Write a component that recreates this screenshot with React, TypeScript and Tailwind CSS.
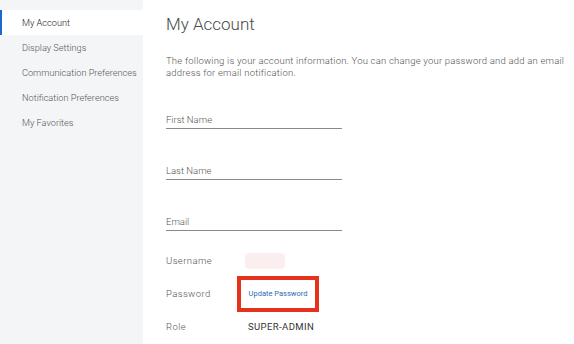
const menu = ['My Account', 'Display Settings', 'Communication Preferences', 'Notification Preferences', 'My Favorites'];

function Field({ label }: { label: string }) {
    return (
        <div className="w-[176px] border-b border-[#8a8a8a] pb-[2px] text-[9.5px] font-light leading-[12px] text-[#555]">
            {label}
        </div>
    );
}

export default function App() {
    return (
        <div className="flex h-[344px] w-[574px] overflow-hidden bg-white font-['Roboto',sans-serif]">
            {/* Sidebar */}
            <div className="w-[143px] shrink-0 bg-[#f4f5f7] pt-[10px]">
                {menu.map((item, i) => (
                    <div
                        key={item}
                        className={`flex h-[25px] items-center text-[9.2px] font-light ${i === 0 ? 'border-l-[2px] border-[#1d69cc] bg-white pl-[20px] text-[#222]' : 'pl-[22px] text-[#555]'}`}
                    >
                        {item}
                    </div>
                ))}
            </div>

            {/* Content */}
            <div className="flex-1 pl-[23px] pr-[4px]">
                <h1 className="mt-[13px] text-[17px] font-light leading-[22px] text-[#4a4a4a]">My Account</h1>
                <p className="mt-[20px] w-[404px] text-[9.5px] font-light leading-[12px] tracking-[0.2px] text-[#555]">
                    The following is your account information. You can change your password and add an email address for email notification.
                </p>

                <div className="mt-[35px] flex flex-col gap-[36px]">
                    <Field label="First Name" />
                    <Field label="Last Name" />
                    <Field label="Email" />
                </div>

                <div className="mt-[14px] flex flex-col text-[9.5px] font-light tracking-[0.4px] text-[#555]">
                    <div className="flex h-[32px] items-center">
                        <span className="w-[79px]">Username</span>
                        <span className="h-[16px] w-[40px] rounded-sm bg-[#fbeeee]" />
                    </div>
                    <div className="flex h-[34px] items-center">
                        <span className="w-[71px]">Password</span>
                        <span className="flex h-[36px] w-[82px] items-center justify-center border-[4px] border-[#e5321c] text-[7.5px] font-normal tracking-normal text-[#2c6db0]">
                            Update Password
                        </span>
                    </div>
                    <div className="flex h-[32px] items-center">
                        <span className="w-[82px]">Role</span>
                        <span className="font-normal text-[#333]">SUPER-ADMIN</span>
                    </div>
                </div>
            </div>
        </div>
    );
}
